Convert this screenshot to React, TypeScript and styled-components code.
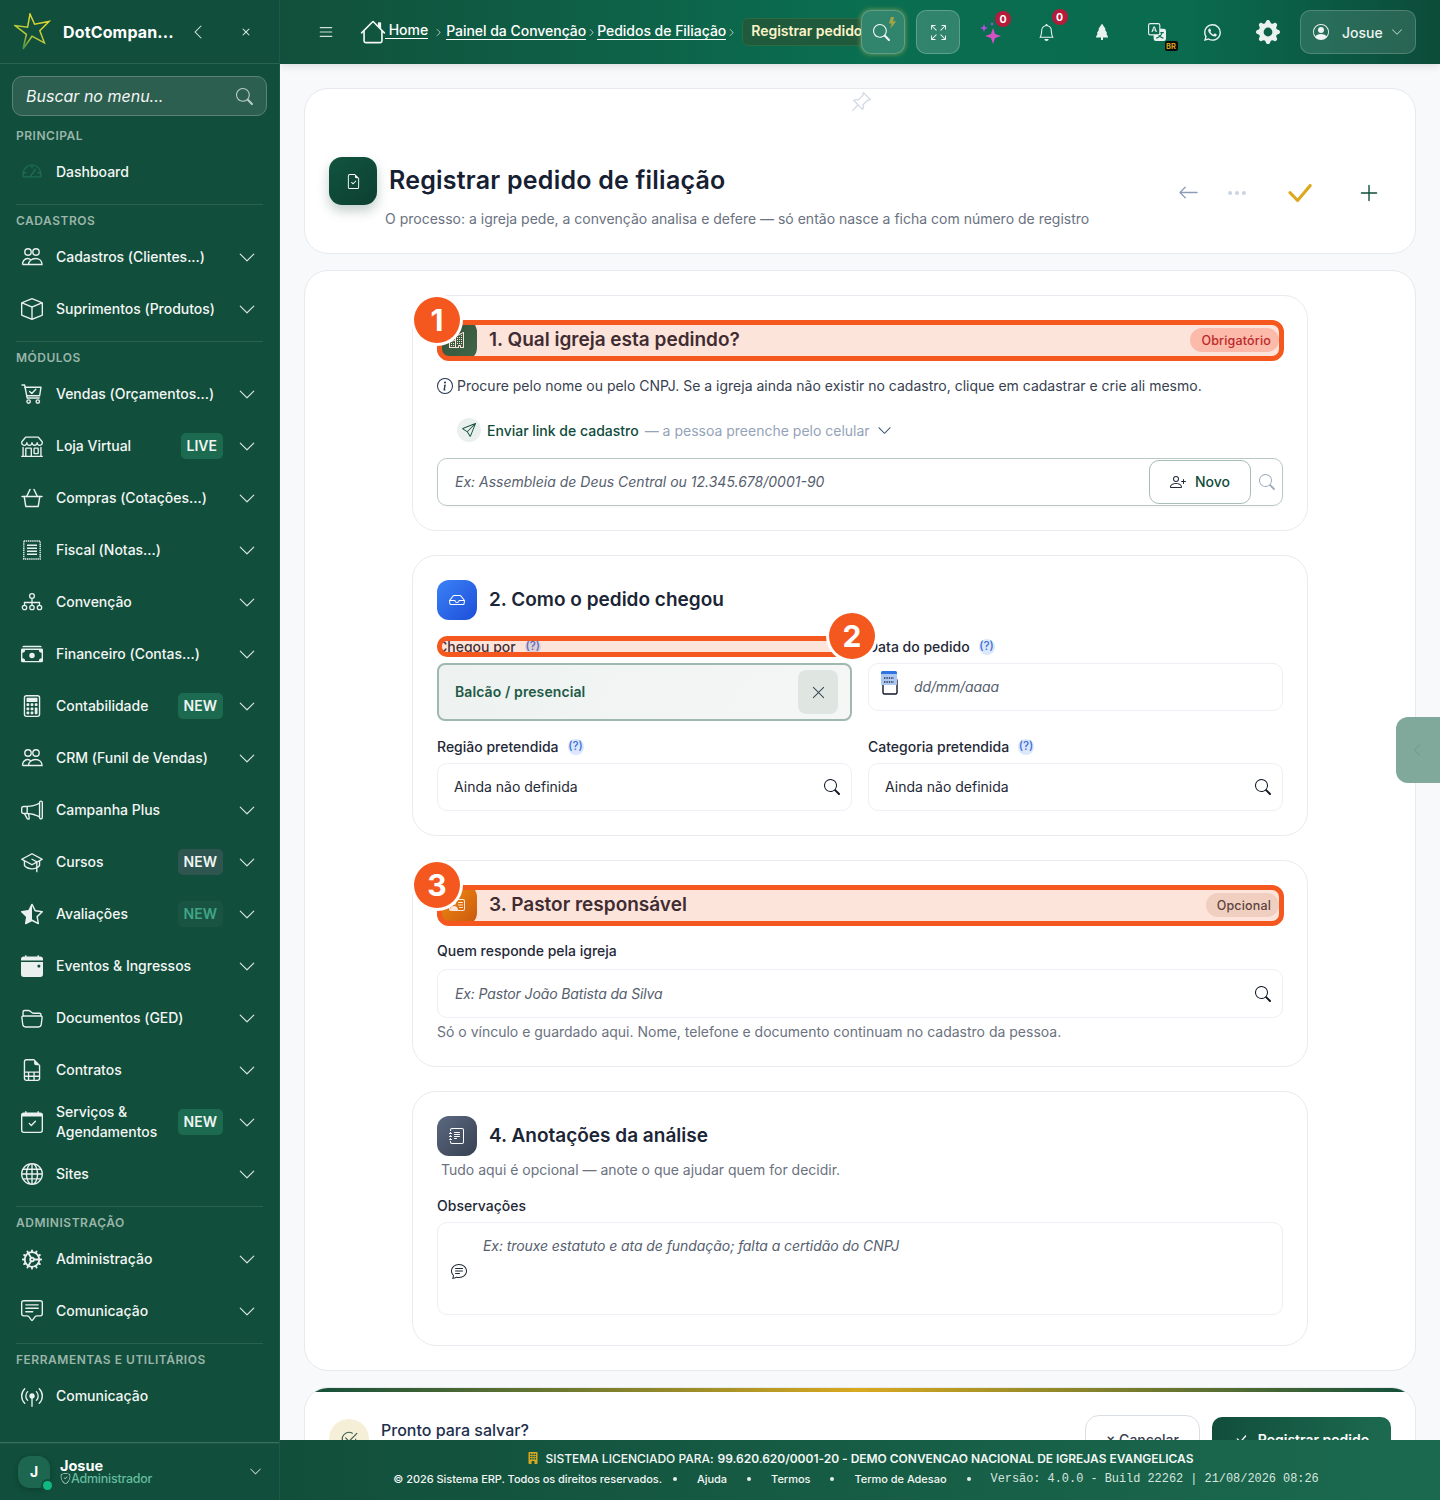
import React from 'react';
import styled, { createGlobalStyle } from 'styled-components';
import {
  BsShop, BsCashStack, BsCalculator, BsMegaphone, BsStarHalf, BsCalendarEventFill, BsFolder2Open,
  BsFileEarmarkSpreadsheet, BsCalendarCheck, BsGlobe, BsChatSquareText, BsBroadcastPin, BsHouse, BsSearch,
  BsList, BsArrowsFullscreen, BsBell, BsTreeFill, BsTranslate, BsWhatsapp, BsGearFill,
  BsPersonCircle, BsChevronDown, BsChevronLeft, BsChevronRight, BsX, BsFileEarmarkCheck, BsPinAngle, BsArrowLeft, BsThreeDots,
  BsCheckLg, BsPlusLg, BsBuildings, BsInbox, BsPersonVcard, BsJournalText, BsInfoCircle, BsSend, BsPersonPlus,
  BsChatText, BsXLg, BsShieldCheck, BsBuildingFill, BsLightningFill, BsBox, BsCheck2Circle,
} from 'react-icons/bs';
import { PiGauge, PiGraduationCap } from 'react-icons/pi';
import { Cog } from 'lucide-react';

const Global = createGlobalStyle`
  * { box-sizing: border-box; }
  html, body { margin: 0; padding: 0; background: #f8f9fb; }
  body { font-family: Inter, "Liberation Sans", sans-serif; color: #1f2937; }
`;

const Shell = styled.div`
  display: grid;
  grid-template-columns: 280px 1fr;
  width: 1440px;
  height: 1500px;
  overflow: hidden;
`;

/* ---------- sidebar ---------- */
const Sidebar = styled.aside`
  background: #114e3b;
  color: #f1f5f3;
  display: flex;
  flex-direction: column;
  height: 1500px;
  border-right: 1px solid #1b5a47;
`;
const Brand = styled.div`
  height: 64px;
  display: flex;
  align-items: center;
  padding: 0 12px 0 14px;
  border-bottom: 1px solid #2a6451;
`;
const BrandName = styled.span`
  font-weight: 700;
  font-size: 16px;
  letter-spacing: 0.15px;
  color: #fff;
  width: 114px;
  margin-left: 11px;
  white-space: nowrap;
`;
const BrandBtn = styled.span<{ $ml: number; $size: number }>`
  display: flex;
  color: #e6eeea;
  font-size: ${(p) => p.$size}px;
  margin-left: ${(p) => p.$ml}px;
  stroke: currentColor;
  stroke-width: 0.5px;
`;
const MenuSearch = styled.div`
  margin: 12px 12px 4px 12px;
  height: 40px;
  width: 255px;
  border-radius: 10px;
  background: #2d5f50;
  border: 1px solid #5b8274;
  display: flex;
  align-items: center;
  justify-content: space-between;
  padding: 0 13px;
  color: #f2f6f4;
  font-style: italic;
  font-size: 16px;
  svg { color: #b7cbc3; font-size: 17px; }
`;
const Nav = styled.nav`
  flex: 1;
  display: flex;
  flex-direction: column;
`;
const NavSection = styled.div<{ $first?: boolean }>`
  margin: ${(p) => (p.$first ? '0 16px' : '6px 16px 0 16px')};
  border-top: ${(p) => (p.$first ? 'none' : '1px solid #29614f')};
  padding: 8px 0 2px 0;
  font-size: 12px;
  line-height: 16px;
  font-weight: 600;
  letter-spacing: 0.52px;
  color: #9ab5aa;
`;
const NavRow = styled.div`
  height: 52px;
  display: flex;
  align-items: center;
  padding: 0 23px 0 21px;
`;
const NavIcon = styled.span<{ $dim?: boolean }>`
  width: 22px;
  height: 22px;
  display: flex;
  align-items: center;
  justify-content: center;
  font-size: 22px;
  color: ${(p) => (p.$dim ? '#1f6b55' : '#e9f0ed')};
  flex: none;
`;
const NavText = styled.span`
  margin-left: 13px;
  flex: 1;
  font-size: 14px;
  line-height: 20px;
  font-weight: 500;
  letter-spacing: -0.02px;
  color: #f3f6f5;
`;
const NavBadge = styled.span<{ $tone?: 'green' | 'slate' | 'faint' }>`
  height: 26px;
  padding: 0 6px 1px 6px;
  display: flex;
  align-items: center;
  border-radius: 5px;
  font-size: 14px;
  font-weight: 600;
  margin-right: 15px;
  background: ${(p) => (p.$tone === 'slate' ? '#2f5551' : p.$tone === 'faint' ? '#185441' : '#1c6b50')};
  color: ${(p) => (p.$tone === 'faint' ? '#3fa585' : '#eef5f2')};
`;
const NavChevron = styled.span`
  display: flex;
  justify-content: center;
  font-size: 21px;
  color: #dfe9e5;
  flex: none;
  width: 18px;
`;
const UserBar = styled.div`
  height: 58px;
  border-top: 1px solid #3a6e5d;
  display: flex;
  align-items: center;
  padding: 0 17px 0 18px;
  box-shadow: inset 0 1px 0 #1a5845;
`;
const Avatar = styled.div`
  position: relative;
  width: 32px;
  height: 32px;
  border-radius: 12px;
  background: #1d6650;
  display: flex;
  align-items: center;
  justify-content: center;
  color: #fff;
  font-size: 14px;
  font-weight: 700;
  box-shadow: 0 2px 6px rgba(0, 0, 0, 0.2);
`;
const OnlineDot = styled.span`
  position: absolute;
  right: -2px;
  bottom: -2px;
  width: 9px;
  height: 9px;
  border-radius: 50%;
  background: #10b981;
  box-shadow: 0 0 0 2px #114e3b;
`;
const UserInfo = styled.div`
  margin-left: 10px;
  flex: 1;
  display: flex;
  flex-direction: column;
`;
const UserName = styled.span`
  font-size: 14.5px;
  line-height: 13px;
  font-weight: 700;
  color: #fff;
`;
const UserRole = styled.span`
  display: flex;
  align-items: center;
  font-size: 12.5px;
  line-height: 13px;
  font-weight: 500;
  letter-spacing: -0.25px;
  color: #64bb9d;
  svg { font-size: 11px; color: #b6d4c9; }
`;
const UserChevron = styled.span`
  display: flex;
  font-size: 13px;
  color: #cfdcd7;
`;

/* ---------- top bar ---------- */
const MainCol = styled.div`
  position: relative;
  height: 1500px;
  overflow: hidden;
  display: flex;
  flex-direction: column;
`;
const Topbar = styled.header`
  height: 64px;
  flex: none;
  background: linear-gradient(90deg, #12503b 0%, #0a6e50 50%, #0a6b4e 78%, #0c4c39 100%);
  box-shadow: 0 2px 8px rgba(0, 0, 0, 0.12);
  display: flex;
  align-items: center;
  padding: 0 24px 0 38px;
  color: #fff;
  z-index: 1;
`;
const Burger = styled.span`
  display: flex;
  font-size: 16px;
  color: #cfe0da;
  margin-right: 26px;
  transform: scale(1.15, 1.1);
`;
const Crumbs = styled.div`
  width: 501px;
  flex: none;
  display: flex;
  align-items: center;
  overflow: hidden;
  white-space: nowrap;
  font-size: 14px;
  font-weight: 500;
  letter-spacing: -0.03px;
  color: #fff;
  & > * { flex: none; }
`;
const CrumbHome = styled.span`
  display: flex;
  font-size: 26px;
  color: #f2f7f5;
`;
const CrumbLink = styled.span<{ $lift: number; $ml?: number }>`
  border-bottom: 1px solid #fff;
  line-height: 17px;
  position: relative;
  top: ${(p) => -p.$lift}px;
  margin-left: ${(p) => p.$ml ?? 0}px;
`;
const CrumbSep = styled.span<{ $ml?: number; $mr?: number }>`
  display: flex;
  justify-content: center;
  width: 11px;
  font-size: 9px;
  color: #d8e6e1;
  margin-left: ${(p) => p.$ml ?? 0}px;
  margin-right: ${(p) => p.$mr ?? 0}px;
`;
const CrumbCurrent = styled.span`
  margin-left: 5px;
  height: 28px;
  padding: 0 10px 3px 8px;
  display: flex;
  align-items: center;
  border-radius: 6px;
  background: #1f5a3c;
  border: 1px solid #2b6a45;
  color: #fdf3c9;
  font-weight: 600;
`;
const TopBtn = styled.span<{ $glow?: boolean; $mr: number }>`
  position: relative;
  width: 44px;
  height: 44px;
  margin-right: ${(p) => p.$mr}px;
  display: flex;
  align-items: center;
  justify-content: center;
  border-radius: 10px;
  flex: none;
  padding-right: ${(p) => (p.$glow ? 3 : 0)}px;
  background: rgba(255, 255, 255, 0.16);
  border: 1px solid rgba(255, 255, 255, 0.22);
  font-size: ${(p) => (p.$glow ? 17 : 15)}px;
  color: #f1f7f4;
  box-shadow: ${(p) => (p.$glow ? '0 0 4px 1px rgba(190,190,90,.45)' : 'none')};
`;
const Bolt = styled.span`
  position: absolute;
  top: 6px;
  right: 6px;
  display: flex;
  font-size: 11px;
  color: #a3a447;
`;
const TopSlot = styled.span<{ $size: number; $color?: string }>`
  position: relative;
  width: 55.5px;
  height: 44px;
  flex: none;
  display: flex;
  align-items: center;
  justify-content: center;
  font-size: ${(p) => p.$size}px;
  color: ${(p) => p.$color || '#e9f2ee'};
`;
const CountBadge = styled.span<{ $x: number; $y: number }>`
  position: absolute;
  left: ${(p) => p.$x}px;
  top: ${(p) => p.$y}px;
  width: 16px;
  height: 16px;
  border-radius: 50%;
  background: #b51c3c;
  color: #fff;
  font-size: 10.5px;
  font-weight: 700;
  display: flex;
  align-items: center;
  justify-content: center;
`;
const LangBadge = styled.span`
  position: absolute;
  left: 35px;
  top: 31px;
  width: 13px;
  height: 10px;
  border-radius: 2px;
  background: #0a0a0a;
  color: #d8a21f;
  font-size: 7.5px;
  font-weight: 700;
  display: flex;
  align-items: center;
  justify-content: center;
`;
const UserBtn = styled.span`
  width: 116px;
  height: 44px;
  margin-left: 4px;
  flex: none;
  display: flex;
  align-items: center;
  padding: 0 12px;
  border-radius: 10px;
  background: rgba(255, 255, 255, 0.12);
  border: 1px solid rgba(255, 255, 255, 0.18);
  font-size: 14px;
  font-weight: 500;
  color: #eef5f2;
  svg:first-child { font-size: 16px; margin-right: 13px; }
  svg:last-child { font-size: 12px; margin-left: 8px; color: #c7d9d2; }
`;

/* ---------- content ---------- */
const Content = styled.main`
  padding: 24px 24px 0 24px;
  display: flex;
  flex-direction: column;
  gap: 16px;
  background: #f8f9fb;
  flex: 1;
`;
const HeaderCard = styled.section`
  position: relative;
  height: 166px;
  background: #fff;
  border: 1px solid #e6e9ee;
  border-radius: 24px;
  padding: 68px 24px 25px 24px;
  display: flex;
  align-items: center;
  justify-content: space-between;
`;
const Pin = styled.span`
  position: absolute;
  top: 2px;
  left: 545px;
  display: flex;
  font-size: 22px;
  color: #d3dbe6;
`;
const TitleBlock = styled.div`
  display: flex;
  flex-direction: column;
`;
const TitleRow = styled.div`
  display: flex;
  align-items: center;
  gap: 12px;
`;
const TitleIcon = styled.span`
  width: 48px;
  height: 48px;
  border-radius: 13px;
  background: linear-gradient(145deg, #115440, #0d3f30);
  box-shadow: 0 6px 12px rgba(13, 63, 48, 0.25);
  color: #fff;
  display: flex;
  align-items: center;
  justify-content: center;
  font-size: 15px;
`;
const PageTitle = styled.h1`
  margin: 0;
  font-size: 25px;
  line-height: 32px;
  font-weight: 600;
  letter-spacing: 0.22px;
  color: #162033;
  position: relative;
  top: -1px;
`;
const Subtitle = styled.p`
  margin: 5px 0 1px 56px;
  font-size: 14px;
  line-height: 17px;
  color: #6b7280;
`;
const Actions = styled.div`
  display: flex;
  align-items: center;
`;
const ActionBtn = styled.span<{ $color: string; $size: number; $w: number; $heavy?: boolean }>`
  width: ${(p) => p.$w}px;
  display: flex;
  justify-content: center;
  color: ${(p) => p.$color};
  font-size: ${(p) => p.$size}px;
  stroke: currentColor;
  stroke-width: ${(p) => (p.$heavy ? 0.5 : 0)}px;
`;
const FormCard = styled.section`
  background: #fff;
  border: 1px solid #e6e9ee;
  border-radius: 24px;
  padding: 24px;
  display: flex;
  flex-direction: column;
  align-items: center;
  gap: 24px;
`;
const Block = styled.div<{ $pb?: number }>`
  width: 896px;
  border: 1px solid #e8ebef;
  border-radius: 24px;
  padding: 24px 24px ${(p) => p.$pb ?? 24}px 24px;
  background: #fff;
`;
const BlockHead = styled.div`
  position: relative;
  height: 40px;
  display: flex;
  align-items: center;
  gap: 12px;
`;
const BlockIcon = styled.span<{ $bg: string }>`
  width: 40px;
  height: 40px;
  border-radius: 12px;
  background: ${(p) => p.$bg};
  color: #fff;
  font-size: 16px;
  display: flex;
  align-items: center;
  justify-content: center;
  flex: none;
`;
const BlockTitle = styled.h2`
  margin: 0;
  flex: 1;
  font-size: 19px;
  line-height: 24px;
  font-weight: 600;
  letter-spacing: 0;
  color: #1b2536;
`;
const Tag = styled.span<{ $danger?: boolean }>`
  height: 24px;
  margin-right: 4px;
  padding: 0 8px 0 11px;
  border-radius: 12px;
  display: flex;
  align-items: center;
  font-size: 12.5px;
  font-weight: 500;
  letter-spacing: 0.17px;
  background: ${(p) => (p.$danger ? '#fecdc6' : '#f0e6e1')};
  color: ${(p) => (p.$danger ? '#b3202a' : '#3f3f46')};
`;
const TourFrame = styled.span`
  position: absolute;
  inset: 0 -1px -1px 0;
  border: 5px solid #f4581f;
  border-radius: 12px;
  background: rgba(244, 88, 31, 0.16);
  pointer-events: none;
`;
const TourFrameThin = styled(TourFrame)`
  inset: -2px 0 -2px 0;
  border-radius: 10px;
`;
const TourDot = styled.span`
  position: absolute;
  top: -23px;
  left: -23px;
  width: 46px;
  height: 46px;
  border-radius: 50%;
  background: #f4581f;
  box-shadow: 0 0 0 3px #fff;
  color: #fff;
  font-size: 30px;
  font-weight: 700;
  display: flex;
  align-items: center;
  justify-content: center;
  z-index: 2;
`;
const TourDotRight = styled(TourDot)`
  left: auto;
  right: -23px;
  top: -25px;
`;
const InfoLine = styled.p`
  margin: 16px 0 0 0;
  display: flex;
  align-items: center;
  gap: 4px;
  font-size: 14px;
  line-height: 20px;
  color: #374151;
  svg { font-size: 16px; color: #1f3350; }
`;
const SendRow = styled.div`
  margin: 22px 0 0 20px;
  height: 24px;
  display: flex;
  align-items: center;
  font-size: 14px;
`;
const SendIcon = styled.span`
  width: 24px;
  height: 24px;
  border-radius: 50%;
  background: #eaf0ee;
  color: #0f4c3a;
  font-size: 14px;
  display: flex;
  align-items: center;
  justify-content: center;
  margin-right: 6px;
`;
const SendLabel = styled.span`
  color: #0f4c3a;
  font-weight: 500;
`;
const SendHint = styled.span`
  color: #94a3b8;
  margin-left: 6px;
  margin-right: 7px;
`;
const SendChevron = styled.span`
  display: flex;
  color: #33506f;
  font-size: 15px;
`;
const SearchGroup = styled.div`
  margin-top: 16px;
  height: 48px;
  display: flex;
  align-items: center;
  border: 1px solid #b8c9c4;
  border-radius: 10px;
  padding: 0 7px 0 17px;
  box-shadow: 0 1px 2px rgba(0, 0, 0, 0.04);
`;
const Placeholder = styled.span<{ $tight?: boolean }>`
  flex: 1;
  padding-bottom: 1px;
  font-size: 14px;
  font-style: italic;
  letter-spacing: ${(p) => (p.$tight ? '-0.13px' : '0')};
  color: #56606e;
`;
const NovoBtn = styled.span`
  width: 102px;
  height: 44px;
  border: 1px solid #a9bdb7;
  border-radius: 10px;
  display: flex;
  align-items: center;
  justify-content: center;
  gap: 9px;
  font-size: 14px;
  font-weight: 500;
  color: #0f4c3a;
  margin-right: 8px;
  padding-bottom: 1px;
  svg { font-size: 16px; color: #1f2937; }
`;
const FaintSearch = styled.span`
  display: flex;
  font-size: 16px;
  color: #a3aec0;
`;
const FieldGrid = styled.div`
  margin-top: 18px;
  display: grid;
  grid-template-columns: 415px 415px;
  column-gap: 16px;
  row-gap: 17px;
  align-items: start;
`;
const Field = styled.div``;
const FieldLabel = styled.div`
  position: relative;
  height: 17px;
  margin-bottom: 8px;
  display: flex;
  align-items: center;
  gap: 9px;
  font-size: 14px;
  line-height: 17px;
  font-weight: 500;
  color: #1f2937;
`;
const Help = styled.span`
  width: 16px;
  height: 16px;
  border-radius: 50%;
  background: #dbe7fb;
  color: #3b6fd8;
  font-size: 11.5px;
  font-weight: 500;
  display: flex;
  align-items: center;
  justify-content: center;
`;
const Selected = styled.div`
  height: 58px;
  border: 2px solid #a0b9ae;
  border-radius: 8px;
  background: linear-gradient(120deg, #edf2f0, #f5f7f6);
  display: flex;
  align-items: center;
  justify-content: space-between;
  padding: 0 12px 0 16px;
  font-size: 14px;
  font-weight: 600;
  letter-spacing: 0.1px;
  color: #1e5a46;
`;
const SelectedText = styled.span`
  padding-bottom: 1px;
`;
const ClearBtn = styled.span`
  width: 40px;
  height: 44px;
  border-radius: 8px;
  background: #dfe6e2;
  display: flex;
  align-items: center;
  justify-content: center;
  color: #374151;
  font-size: 15px;
`;
const Input = styled.div<{ $h?: number; $pl?: number }>`
  position: relative;
  height: ${(p) => p.$h ?? 48}px;
  border: 1px solid #eceff3;
  border-radius: 10px;
  display: flex;
  align-items: center;
  justify-content: space-between;
  padding: 0 11px 0 ${(p) => p.$pl ?? 16}px;
  font-size: 14px;
  color: #1f2937;
  background: #fff;
`;
const InputValue = styled.span`
  padding-bottom: 1px;
`;
const InputSearch = styled.span`
  display: flex;
  font-size: 16px;
  color: #111827;
`;
const DateIcon = styled.span`
  position: absolute;
  left: 11px;
  top: 6px;
  display: flex;
`;
const FullLabel = styled.div<{ $mt: number; $mb: number }>`
  margin: ${(p) => p.$mt}px 0 ${(p) => p.$mb}px 0;
  font-size: 14px;
  line-height: 17px;
  font-weight: 500;
  color: #1f2937;
`;
const Hint = styled.p<{ $ml?: number }>`
  margin: 4px 0 0 ${(p) => p.$ml ?? 0}px;
  font-size: 14px;
  line-height: 20px;
  color: #6b7280;
`;
const NotesBox = styled.div`
  position: relative;
  height: 93px;
  border: 1px solid #eceff3;
  border-radius: 10px;
  padding: 14px 0 0 45px;
  font-size: 14px;
  line-height: 17px;
  font-style: italic;
  letter-spacing: -0.08px;
  color: #56606e;
`;
const NotesIcon = styled.span`
  position: absolute;
  left: 13px;
  top: 40px;
  display: flex;
  font-size: 16px;
  color: #1f2937;
`;
const SaveCard = styled.section`
  position: relative;
  background: #fff;
  border: 1px solid #e6e9ee;
  border-radius: 24px;
  overflow: hidden;
  padding: 27px 24px 40px 24px;
  display: flex;
  align-items: center;
  justify-content: space-between;
`;
const SaveStrip = styled.span`
  position: absolute;
  top: 0;
  left: 0;
  right: 0;
  height: 4px;
  background: linear-gradient(90deg, #114e3b, #d9a920 50%, #114e3b);
`;
const SaveLead = styled.div`
  display: flex;
  align-items: center;
  gap: 12px;
`;
const SaveCircle = styled.span`
  width: 40px;
  height: 40px;
  border-radius: 50%;
  background: #f6efd7;
  color: #3b5a4d;
  font-size: 18px;
  display: flex;
  align-items: center;
  justify-content: center;
`;
const SaveText = styled.span`
  padding: 1px 0 19px 0;
  font-size: 16px;
  line-height: 20px;
  font-weight: 500;
  color: #1e2f4d;
`;
const SaveActions = styled.div`
  display: flex;
  align-items: center;
  gap: 12px;
`;
const CancelBtn = styled.span`
  width: 115px;
  height: 48px;
  border: 1px solid #d9dee5;
  border-radius: 14px;
  display: flex;
  align-items: center;
  justify-content: center;
  gap: 8px;
  font-size: 14px;
  font-weight: 500;
  color: #374151;
`;
const SubmitBtn = styled.span`
  width: 179px;
  height: 44px;
  border-radius: 10px;
  background: linear-gradient(100deg, #114e3b, #1d6b51);
  display: flex;
  align-items: center;
  justify-content: center;
  gap: 10px;
  font-size: 14px;
  font-weight: 600;
  color: #fff;
`;
const SideTab = styled.span`
  position: absolute;
  right: 0;
  top: 717px;
  width: 44px;
  height: 66px;
  border-radius: 12px 0 0 12px;
  background: #80a99b;
  color: #6f9a8b;
  font-size: 14px;
  display: flex;
  align-items: center;
  padding-left: 14px;
  z-index: 2;
`;
const Foot = styled.footer`
  position: absolute;
  left: 0;
  right: 0;
  bottom: 0;
  height: 60px;
  background: linear-gradient(90deg, #124f3b, #1b6a50);
  color: #f3f7f5;
  display: flex;
  flex-direction: column;
  align-items: center;
  z-index: 3;
`;
const FootLine = styled.div`
  margin-top: 9px;
  height: 18px;
  display: flex;
  align-items: center;
  font-size: 12px;
  font-weight: 500;
  letter-spacing: -0.02px;
  white-space: nowrap;
  svg { color: #d9a920; font-size: 12px; margin-right: 7px; }
  b { font-weight: 600; margin-left: 4px; }
`;
const FootLinks = styled.div`
  margin-top: 4px;
  margin-right: 8px;
  height: 16px;
  display: flex;
  align-items: center;
  font-size: 11px;
  font-weight: 500;
  letter-spacing: -0.03px;
  white-space: nowrap;
`;
const FootDot = styled.span<{ $first?: boolean }>`
  width: 4px;
  height: 4px;
  border-radius: 50%;
  background: #e7efec;
  margin: 0 20px 0 ${(p) => (p.$first ? 11 : 20)}px;
`;
const FootMono = styled.span`
  font-family: "Liberation Mono", monospace;
  font-size: 11.9px;
  font-weight: 400;
  letter-spacing: 0;
  color: #d7e5df;
`;

/* ---------- drawn icons ---------- */
const People = () => (
  <svg width="22" height="22" viewBox="0 0 22 22" fill="none" stroke="currentColor" strokeWidth="1.4">
    <circle cx="7" cy="6" r="3.2" />
    <circle cx="15" cy="6" r="3.2" />
    <path d="M1.5 18.5c0-3.2 2.2-6 5-6 1.4 0 2.6.6 3.4 1.6M10 18.5H1.5M7.5 18.5c0-3.4 3-6 7-6s6.5 2.6 6.5 6z" />
  </svg>
);
const OrgChart = () => (
  <svg width="22" height="22" viewBox="0 0 22 22" fill="none" stroke="currentColor" strokeWidth="1.3">
    <circle cx="11" cy="5" r="2.4" />
    <path d="M11 7.5v4M3.5 14v-2.5h15V14M11 11.5V14" />
    <circle cx="3.5" cy="16.5" r="2.2" />
    <circle cx="11" cy="16.5" r="2.2" />
    <circle cx="18.5" cy="16.5" r="2.2" />
  </svg>
);
const CartCheck = () => (
  <svg width="22" height="22" viewBox="0 0 22 22" fill="none" stroke="currentColor" strokeWidth="1.4" strokeLinejoin="round" strokeLinecap="round">
    <path d="M1 2h2.6l2.6 13h12" />
    <path d="M4 4.2h16l-1.4 8.6H5.7" />
    <path d="M8.6 8.4l2.2 2.1 4-4.2" />
    <circle cx="7.6" cy="18.6" r="1.7" />
    <circle cx="16.8" cy="18.6" r="1.7" />
  </svg>
);
const Basket = () => (
  <svg width="22" height="22" viewBox="0 0 22 22" fill="none" stroke="currentColor" strokeWidth="1.5" strokeLinejoin="round" strokeLinecap="round">
    <path d="M1 9.5h20" />
    <path d="M5.6 9.5L9 2.5M16.4 9.5L13 2.5" />
    <path d="M3.2 9.5l1.6 10h12.4l1.6-10" />
  </svg>
);
const Receipt = () => (
  <svg width="22" height="22" viewBox="0 0 22 22" fill="none" stroke="currentColor" strokeWidth="1.4">
    <rect x="2.8" y="2" width="16.4" height="18" strokeDasharray="1.4 0.7" />
    <path d="M6 6.3h10M6 9.3h10M6 12.3h10M6 15.3h10" />
  </svg>
);
const Sparkles = () => (
  <svg width="26" height="26" viewBox="0 0 26 26" fill="#d94fc4">
    <path d="M15 9l2 6 6 2-6 2-2 6-2-6-6-2 6-2z" />
    <path d="M6 5l1.1 2.9L10 9l-2.9 1.1L6 13l-1.1-2.9L2 9l2.9-1.1z" fill="#b84fe0" />
    <path d="M14 3l.6 1.4L16 5l-1.4.6L14 7l-.6-1.4L12 5l1.4-.6z" fill="#b84fe0" />
  </svg>
);
const Logo = () => (
  <svg width="38" height="38" viewBox="0 0 38 38" fill="none">
    <defs>
      <linearGradient id="lg" x1="0.7" y1="0" x2="0.2" y2="1">
        <stop offset="0" stopColor="#e6dc2e" />
        <stop offset="0.6" stopColor="#b9c83a" />
        <stop offset="1" stopColor="#3f8a4a" />
      </linearGradient>
    </defs>
    <path
      d="M16 1l4.6 10.2L35 8.4l-9.2 9.4 4.6 12-12.4-6.6L9 36l3.4-14.6L1 12.6l12.6 1.6z"
      stroke="url(#lg)"
      strokeWidth="1.5"
      strokeLinejoin="miter"
    />
  </svg>
);
const CalendarColor = () => (
  <svg width="20" height="26" viewBox="0 0 20 26">
    <rect x="3" y="9" width="14" height="15" rx="1.5" fill="#fff" stroke="#111827" strokeWidth="1.4" />
    <rect x="1" y="1" width="16" height="14" rx="1.5" fill="#2f74e0" />
    <rect x="1" y="4" width="16" height="11" fill="#d7e3f8" opacity="0.75" />
    <path d="M4 8h10M4 12h10" stroke="#27324a" strokeWidth="1.6" strokeDasharray="1.4 1" />
  </svg>
);

type Item = { label: React.ReactNode; icon: React.ReactNode; badge?: string; tone?: 'green' | 'slate' | 'faint'; dim?: boolean; noChevron?: boolean };
type Group = { title: string; items: Item[] };

const groups: Group[] = [
  { title: 'PRINCIPAL', items: [{ label: 'Dashboard', icon: <PiGauge />, dim: true, noChevron: true }] },
  {
    title: 'CADASTROS',
    items: [
      { label: 'Cadastros (Clientes...)', icon: <People /> },
      { label: 'Suprimentos (Produtos)', icon: <BsBox /> },
    ],
  },
  {
    title: 'MÓDULOS',
    items: [
      { label: 'Vendas (Orçamentos...)', icon: <CartCheck /> },
      { label: 'Loja Virtual', icon: <BsShop />, badge: 'LIVE' },
      { label: 'Compras (Cotações...)', icon: <Basket /> },
      { label: 'Fiscal (Notas...)', icon: <Receipt /> },
      { label: 'Convenção', icon: <OrgChart /> },
      { label: 'Financeiro (Contas...)', icon: <BsCashStack /> },
      { label: 'Contabilidade', icon: <BsCalculator />, badge: 'NEW' },
      { label: 'CRM (Funil de Vendas)', icon: <People /> },
      { label: 'Campanha Plus', icon: <BsMegaphone /> },
      { label: 'Cursos', icon: <PiGraduationCap />, badge: 'NEW', tone: 'slate' },
      { label: 'Avaliações', icon: <BsStarHalf />, badge: 'NEW', tone: 'faint' },
      { label: 'Eventos & Ingressos', icon: <BsCalendarEventFill /> },
      { label: 'Documentos (GED)', icon: <BsFolder2Open /> },
      { label: 'Contratos', icon: <BsFileEarmarkSpreadsheet /> },
      { label: <>Serviços &<br />Agendamentos</>, icon: <BsCalendarCheck />, badge: 'NEW' },
      { label: 'Sites', icon: <BsGlobe /> },
    ],
  },
  {
    title: 'ADMINISTRAÇÃO',
    items: [
      { label: 'Administração', icon: <Cog size={23} /> },
      { label: 'Comunicação', icon: <BsChatSquareText /> },
    ],
  },
  { title: 'FERRAMENTAS E UTILITÁRIOS', items: [{ label: 'Comunicação', icon: <BsBroadcastPin />, noChevron: true }] },
];

export default function App() {
  return (
    <>
      <Global />
      <Shell>
        <Sidebar>
          <Brand>
            <Logo />
            <BrandName>DotCompan...</BrandName>
            <BrandBtn $ml={13} $size={16}><BsChevronLeft /></BrandBtn>
            <BrandBtn $ml={32} $size={16}><BsX /></BrandBtn>
          </Brand>
          <MenuSearch>
            <span>Buscar no menu...</span>
            <BsSearch />
          </MenuSearch>
          <Nav>
            {groups.map((g, gi) => (
              <React.Fragment key={g.title}>
                <NavSection $first={gi === 0}>{g.title}</NavSection>
                {g.items.map((it, i) => (
                  <NavRow key={i}>
                    <NavIcon $dim={it.dim}>{it.icon}</NavIcon>
                    <NavText>{it.label}</NavText>
                    {it.badge && <NavBadge $tone={it.tone}>{it.badge}</NavBadge>}
                    {!it.noChevron && <NavChevron><BsChevronDown /></NavChevron>}
                  </NavRow>
                ))}
              </React.Fragment>
            ))}
          </Nav>
          <UserBar>
            <Avatar>J<OnlineDot /></Avatar>
            <UserInfo>
              <UserName>Josue</UserName>
              <UserRole><BsShieldCheck />Administrador</UserRole>
            </UserInfo>
            <UserChevron><BsChevronDown /></UserChevron>
          </UserBar>
        </Sidebar>

        <MainCol>
          <Topbar>
            <Burger><BsList /></Burger>
            <Crumbs>
              <CrumbHome><BsHouse /></CrumbHome>
              <CrumbLink $lift={2} $ml={-1}>&nbsp;Home</CrumbLink>
              <CrumbSep $ml={5} $mr={2}><BsChevronRight /></CrumbSep>
              <CrumbLink $lift={1}>Painel da Convenção</CrumbLink>
              <CrumbSep><BsChevronRight /></CrumbSep>
              <CrumbLink $lift={1}>Pedidos de Filiação</CrumbLink>
              <CrumbSep><BsChevronRight /></CrumbSep>
              <CrumbCurrent>Registrar pedido de filiação</CrumbCurrent>
            </Crumbs>
            <TopBtn $glow $mr={11}><BsSearch /><Bolt><BsLightningFill /></Bolt></TopBtn>
            <TopBtn $mr={3}><BsArrowsFullscreen /></TopBtn>
            <TopSlot $size={26}><Sparkles /><CountBadge $x={32} $y={1}>0</CountBadge></TopSlot>
            <TopSlot $size={17}><BsBell /><CountBadge $x={33} $y={-1}>0</CountBadge></TopSlot>
            <TopSlot $size={16}><BsTreeFill /></TopSlot>
            <TopSlot $size={18}><BsTranslate /><LangBadge>BR</LangBadge></TopSlot>
            <TopSlot $size={17}><BsWhatsapp /></TopSlot>
            <TopSlot $size={24}><BsGearFill /></TopSlot>
            <UserBtn><BsPersonCircle />Josue<BsChevronDown /></UserBtn>
          </Topbar>

          <Content>
            <HeaderCard>
              <Pin><BsPinAngle /></Pin>
              <TitleBlock>
                <TitleRow>
                  <TitleIcon><BsFileEarmarkCheck /></TitleIcon>
                  <PageTitle>Registrar pedido de filiação</PageTitle>
                </TitleRow>
                <Subtitle>O processo: a igreja pede, a convenção analisa e defere — só então nasce a ficha com número de registro</Subtitle>
              </TitleBlock>
              <Actions>
                <ActionBtn $color="#8e9cb8" $size={21} $w={70} $heavy><BsArrowLeft /></ActionBtn>
                <ActionBtn $color="#ccd5e1" $size={22} $w={28}><BsThreeDots /></ActionBtn>
                <ActionBtn $color="#dba81e" $size={34} $w={96}><BsCheckLg /></ActionBtn>
                <ActionBtn $color="#0f4c3a" $size={22} $w={44} $heavy><BsPlusLg /></ActionBtn>
              </Actions>
            </HeaderCard>

            <FormCard>
              <Block>
                <BlockHead>
                  <BlockIcon $bg="linear-gradient(135deg,#114e3b,#1d6b51)"><BsBuildings /></BlockIcon>
                  <BlockTitle>1. Qual igreja esta pedindo?</BlockTitle>
                  <Tag $danger>Obrigatório</Tag>
                  <TourFrame />
                  <TourDot>1</TourDot>
                </BlockHead>
                <InfoLine><BsInfoCircle />Procure pelo nome ou pelo CNPJ. Se a igreja ainda não existir no cadastro, clique em cadastrar e crie ali mesmo.</InfoLine>
                <SendRow>
                  <SendIcon><BsSend /></SendIcon>
                  <SendLabel>Enviar link de cadastro</SendLabel>
                  <SendHint>— a pessoa preenche pelo celular</SendHint>
                  <SendChevron><BsChevronDown /></SendChevron>
                </SendRow>
                <SearchGroup>
                  <Placeholder>Ex: Assembleia de Deus Central ou 12.345.678/0001-90</Placeholder>
                  <NovoBtn><BsPersonPlus />Novo</NovoBtn>
                  <FaintSearch><BsSearch /></FaintSearch>
                </SearchGroup>
              </Block>

              <Block>
                <BlockHead>
                  <BlockIcon $bg="linear-gradient(135deg,#3b82f6,#1d4ed8)"><BsInbox /></BlockIcon>
                  <BlockTitle>2. Como o pedido chegou</BlockTitle>
                </BlockHead>
                <FieldGrid>
                  <Field>
                    <FieldLabel>
                      Chegou por <Help>(?)</Help>
                      <TourFrameThin />
                      <TourDotRight>2</TourDotRight>
                    </FieldLabel>
                    <Selected><SelectedText>Balcão / presencial</SelectedText><ClearBtn><BsXLg /></ClearBtn></Selected>
                  </Field>
                  <Field>
                    <FieldLabel>Data do pedido <Help>(?)</Help></FieldLabel>
                    <Input $pl={45}>
                      <DateIcon><CalendarColor /></DateIcon>
                      <Placeholder $tight>dd/mm/aaaa</Placeholder>
                    </Input>
                  </Field>
                  <Field>
                    <FieldLabel>Região pretendida <Help>(?)</Help></FieldLabel>
                    <Input><InputValue>Ainda não definida</InputValue><InputSearch><BsSearch /></InputSearch></Input>
                  </Field>
                  <Field>
                    <FieldLabel>Categoria pretendida <Help>(?)</Help></FieldLabel>
                    <Input><InputValue>Ainda não definida</InputValue><InputSearch><BsSearch /></InputSearch></Input>
                  </Field>
                </FieldGrid>
              </Block>

              <Block>
                <BlockHead>
                  <BlockIcon $bg="linear-gradient(135deg,#f59e0b,#c2570c)"><BsPersonVcard /></BlockIcon>
                  <BlockTitle>3. Pastor responsável</BlockTitle>
                  <Tag>Opcional</Tag>
                  <TourFrame />
                  <TourDot>3</TourDot>
                </BlockHead>
                <FullLabel $mt={17} $mb={10}>Quem responde pela igreja</FullLabel>
                <Input $h={49} $pl={17}>
                  <Placeholder $tight>Ex: Pastor João Batista da Silva</Placeholder>
                  <InputSearch><BsSearch /></InputSearch>
                </Input>
                <Hint>Só o vínculo e guardado aqui. Nome, telefone e documento continuam no cadastro da pessoa.</Hint>
              </Block>

              <Block $pb={30}>
                <BlockHead>
                  <BlockIcon $bg="linear-gradient(135deg,#5b6880,#374151)"><BsJournalText /></BlockIcon>
                  <BlockTitle>4. Anotações da análise</BlockTitle>
                </BlockHead>
                <Hint $ml={4}>Tudo aqui é opcional — anote o que ajudar quem for decidir.</Hint>
                <FullLabel $mt={17} $mb={8}>Observações</FullLabel>
                <NotesBox>
                  Ex: trouxe estatuto e ata de fundação; falta a certidão do CNPJ
                  <NotesIcon><BsChatText /></NotesIcon>
                </NotesBox>
              </Block>
            </FormCard>

            <SaveCard>
              <SaveStrip />
              <SaveLead>
                <SaveCircle><BsCheck2Circle /></SaveCircle>
                <SaveText>Pronto para salvar?</SaveText>
              </SaveLead>
              <SaveActions>
                <CancelBtn>× Cancelar</CancelBtn>
                <SubmitBtn><BsCheckLg />Registrar pedido</SubmitBtn>
              </SaveActions>
            </SaveCard>
          </Content>

          <SideTab><BsChevronLeft /></SideTab>

          <Foot>
            <FootLine>
              <BsBuildingFill />SISTEMA LICENCIADO PARA:<b>99.620.620/0001-20 - DEMO CONVENCAO NACIONAL DE IGREJAS EVANGELICAS</b>
            </FootLine>
            <FootLinks>
              © 2026 Sistema ERP. Todos os direitos reservados.
              <FootDot $first />Ajuda<FootDot />Termos<FootDot />Termo de Adesao<FootDot />
              <FootMono>Versão: 4.0.0 - Build 22262 | 21/08/2026 08:26</FootMono>
            </FootLinks>
          </Foot>
        </MainCol>
      </Shell>
    </>
  );
}
